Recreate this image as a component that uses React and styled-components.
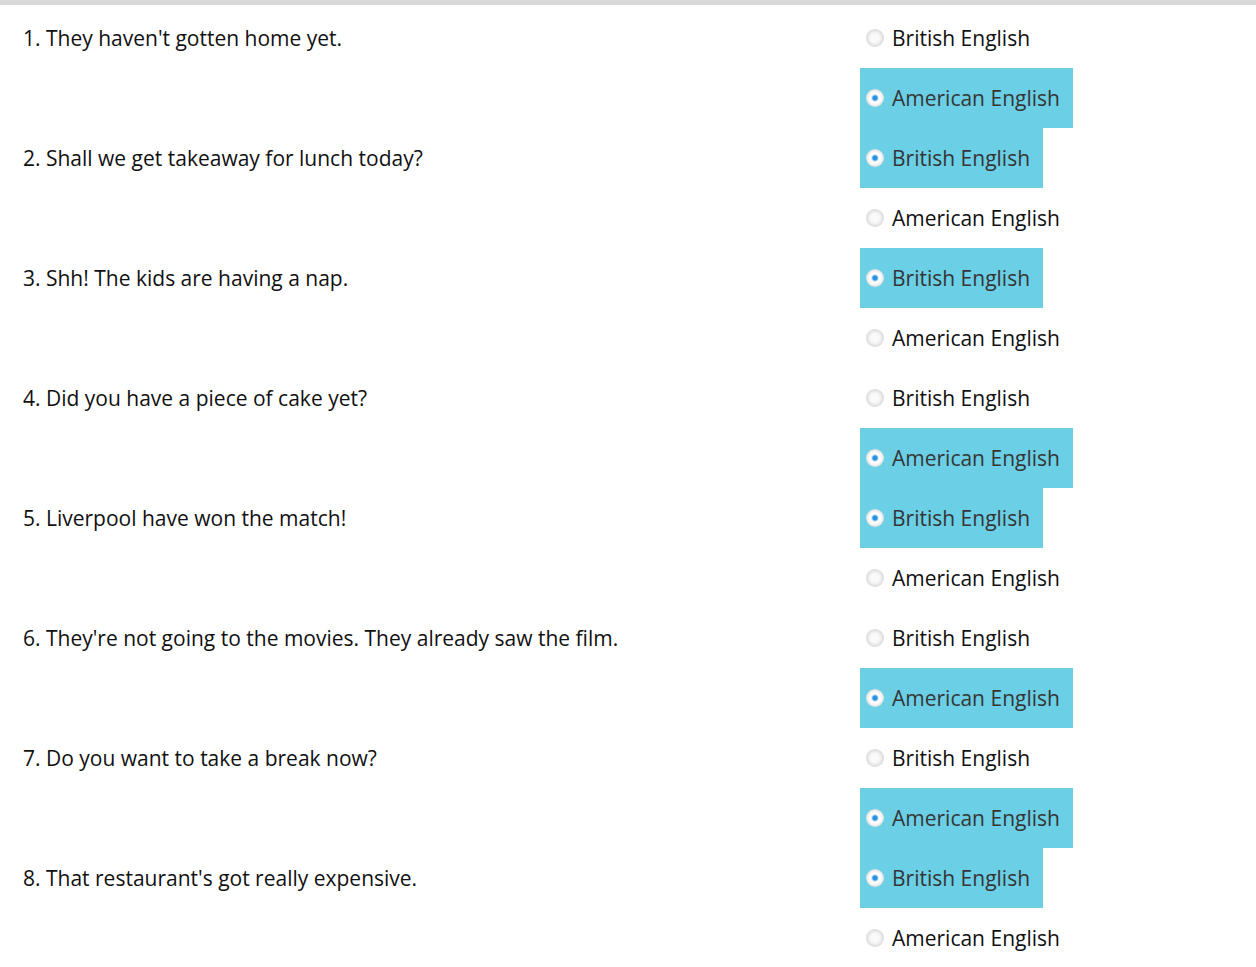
import React from "react";
import styled, { createGlobalStyle } from "styled-components";

const Global = createGlobalStyle`
  html, body { margin: 0; padding: 0; background: #fff; }
  body { font-family: "Open Sans", "Liberation Sans", sans-serif; }
`;

const TopBar = styled.div`
  height: 5px;
  background: #d9d9d9;
`;

const List = styled.div`
  padding-top: 3px;
`;

const Item = styled.div`
  display: grid;
  grid-template-columns: 860px auto;
`;

const Question = styled.div`
  padding-left: 23px;
  height: 60px;
  display: flex;
  align-items: center;
  font-size: 21px;
  color: #111;
`;

const Options = styled.div`
  display: flex;
  flex-direction: column;
  align-items: flex-start;
`;

const Option = styled.label`
  display: flex;
  align-items: center;
  height: 60px;
  padding: 0 13px 0 6px;
  font-size: 21px;
  color: ${(p) => (p.$on ? "#353535" : "#111")};
  background: ${(p) => (p.$on ? "#6bcfe6" : "transparent")};
`;

const Radio = styled.span`
  width: 18px;
  height: 18px;
  border-radius: 50%;
  margin-right: 8px;
  flex: none;
  box-sizing: border-box;
  background: ${(p) =>
    p.$on
      ? "radial-gradient(circle, #2a93e8 0 2.2px, #cfe7f6 3.2px, #ffffff 4.5px, #f7f7f7 6.5px, #dcdcdc 9px)"
      : "radial-gradient(circle, #fafafa 0 4px, #efefef 6px, #d9d9d9 9px)"};
`;

const data = [
  { q: "1. They haven't gotten home yet.", a: 1 },
  { q: "2. Shall we get takeaway for lunch today?", a: 0 },
  { q: "3. Shh! The kids are having a nap.", a: 0 },
  { q: "4. Did you have a piece of cake yet?", a: 1 },
  { q: "5. Liverpool have won the match!", a: 0 },
  { q: "6. They're not going to the movies. They already saw the film.", a: 1 },
  { q: "7. Do you want to take a break now?", a: 1 },
  { q: "8. That restaurant's got really expensive.", a: 0 },
];

const labels = ["British English", "American English"];

export default function App() {
  return (
    <>
      <Global />
      <TopBar />
      <List>
        {data.map((d, i) => (
          <Item key={i}>
            <Question>{d.q}</Question>
            <Options>
              {labels.map((l, j) => (
                <Option key={j} $on={d.a === j}>
                  <Radio $on={d.a === j} />
                  {l}
                </Option>
              ))}
            </Options>
          </Item>
        ))}
      </List>
    </>
  );
}
